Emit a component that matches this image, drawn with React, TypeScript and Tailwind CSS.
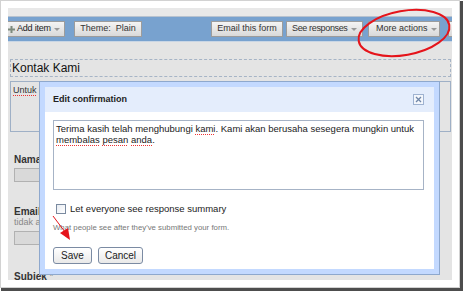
import React from 'react';

const toolbarBtn =
  'shrink-0 h-[16px] flex items-center px-[7px] border border-[#9c9c9c] bg-gradient-to-b from-[#f4f4f4] to-[#d9d9d9] text-[9px] text-[#333] whitespace-nowrap overflow-hidden';

const Caret = () => (
  <span className="shrink-0 ml-[3px] w-0 h-0 border-l-[3px] border-r-[3px] border-t-[3px] border-l-transparent border-r-transparent border-t-[#999]" />
);

const Squiggle = ({ children }: { children: React.ReactNode }) => (
  <span className="underline decoration-dotted decoration-[#e33] decoration-[1px] underline-offset-2">{children}</span>
);

export default function App() {
  return (
    <div className="relative w-[463px] h-[292px] bg-white font-['Liberation_Sans',Arial,sans-serif] overflow-hidden">
      {/* photo frame with drop shadow */}
      <div className="w-[460px] h-[288px] border border-[#d2d2d2] shadow-[2px_2px_0_1px_#4d4d4d] p-[7px] bg-white">
        <div className="relative w-full h-full bg-[#e4e4e4] overflow-hidden">
          {/* top strip */}
          <div className="h-[9px] bg-[#e8e8e8] border-b border-[#b7c2cf]" />

          {/* toolbar */}
          <div className="h-[25px] bg-[#78a2cf] border-b border-[#c9d6e5] flex items-center">
            <div className={`${toolbarBtn} ml-[-3px] w-[60px] pl-[2px] pr-[4px]`}>
              <svg width="7" height="7" viewBox="0 0 7 7" className="shrink-0 mr-[2px]">
                <path d="M2.5 0h2v2.5H7v2H4.5V7h-2V4.5H0v-2h2.5z" fill="#7d8a7d" />
              </svg>
              <span className="text-[#222] tracking-[-0.2px]">Add item</span>
              <Caret />
            </div>
            <div className={`${toolbarBtn} ml-[9px] w-[68px] justify-center`}>Theme:&nbsp; Plain</div>
            <div className={`${toolbarBtn} ml-[69px] w-[72px] justify-center`}>Email this form</div>
            <div className={`${toolbarBtn} ml-[3px] w-[77px] pl-[5px] pr-[3px]`}>
              <span className="tracking-[-0.35px]">See responses</span>
              <Caret />
            </div>
            <div className={`${toolbarBtn} ml-[5px] w-[72px] pl-[7px] pr-[4px]`}>
              More actions
              <Caret />
            </div>
            <div className={`${toolbarBtn} ml-[8px] w-[40px] text-[#aaa]`}>Se</div>
          </div>

          {/* form body */}
          <div className="pl-[2px] pr-[1px] pt-[17px]">
            <div className="h-[18px] border border-dashed border-[#a6b4c6] flex items-center px-[1px] text-[12px] text-[#111]">
              Kontak Kami
            </div>
            <div className="mt-[4px] h-[51px] border border-[#9fb0c6] px-[2px] pt-[2px] text-[9px] text-[#333]">
              <Squiggle>Untuk</Squiggle> mengirim pesan kepada kami, silakan isi formulir di bawah ini.
            </div>

            <div className="ml-[4px] mt-[22px] text-[10px] leading-[12px] font-bold text-[#333]">Nama</div>
            <div className="ml-[4px] mt-[2px] h-[14px] w-[200px] border border-[#b1b1b1] bg-[#d9d9d9]" />

            <div className="ml-[4px] mt-[24px] text-[10px] leading-[11px] font-bold text-[#333]">Email</div>
            <div className="ml-[4px] text-[9px] leading-[11px] text-[#888]">tidak akan dipublikasikan</div>
            <div className="ml-[4px] mt-[3px] h-[14px] w-[200px] border border-[#b1b1b1] bg-[#d9d9d9]" />

            <div className="ml-[4px] mt-[26px] text-[10px] leading-[12px] font-bold text-[#333]">
              Subiek <span className="text-[#888] font-normal">*</span>
            </div>
          </div>

          {/* edit confirmation dialog */}
          <div className="absolute left-[31px] top-[73px] w-[401px] h-[194px] border border-[#8ea8cd] bg-[#c3d9ff] p-[5px]">
            <div className="w-full h-full bg-white flex flex-col">
              <div className="h-[25px] bg-[#e4edfc] flex items-center justify-between pl-[8px] pr-[10px]">
                <span className="text-[9px] font-bold text-[#222]">Edit confirmation</span>
                <span className="w-[11px] h-[11px] border border-[#9fb3d1] bg-[#f4f7fc] flex items-center justify-center">
                  <svg width="7" height="7" viewBox="0 0 7 7">
                    <path d="M1 1l5 5M6 1l-5 5" stroke="#6f86a8" strokeWidth="1.3" />
                  </svg>
                </span>
              </div>
              <div className="px-[8px]">
                <div className="mt-[8px] h-[70px] w-[371px] border border-[#a6b3c6] px-[2px] pt-[2px] text-[9.5px] leading-[11px] text-[#222]">
                  Terima kasih telah menghubungi <Squiggle>kami</Squiggle>. Kami akan berusaha sesegera mungkin untuk{' '}
                  <Squiggle>membalas</Squiggle> <Squiggle>pesan</Squiggle> <Squiggle>anda</Squiggle>.
                </div>
                <div className="mt-[12px] ml-[3px] flex items-center">
                  <span className="w-[10px] h-[10px] border border-[#7a8aa0] bg-gradient-to-br from-[#e8ecf2] to-white" />
                  <span className="ml-[4px] text-[9.5px] text-[#222]">Let everyone see response summary</span>
                </div>
                <div className="mt-[7px] text-[7.8px] leading-[10px] text-[#777]">
                  What people see after they've submitted your form.
                </div>
                <div className="mt-[14px] flex gap-[6px]">
                  <button className="h-[17px] w-[39px] border border-[#7b8ba3] rounded-[3px] bg-gradient-to-b from-white to-[#e9e9e9] text-[10px] text-[#222]">
                    Save
                  </button>
                  <button className="h-[17px] w-[45px] border border-[#7b8ba3] rounded-[3px] bg-gradient-to-b from-white to-[#e9e9e9] text-[10px] text-[#222]">
                    Cancel
                  </button>
                </div>
              </div>
            </div>
          </div>
        </div>
      </div>

      {/* annotations */}
      <svg className="absolute left-0 top-0 pointer-events-none" width="463" height="292" viewBox="0 0 463 292">
        <ellipse cx="404" cy="33" rx="46" ry="22" transform="rotate(-10 404 33)" fill="none" stroke="#e5141b" strokeWidth="2" />
        <line x1="53" y1="216" x2="65" y2="232" stroke="#e5141b" strokeWidth="1" />
        <path d="M70 240 L60 233 L68 228 Z" fill="#e5141b" />
      </svg>
    </div>
  );
}
